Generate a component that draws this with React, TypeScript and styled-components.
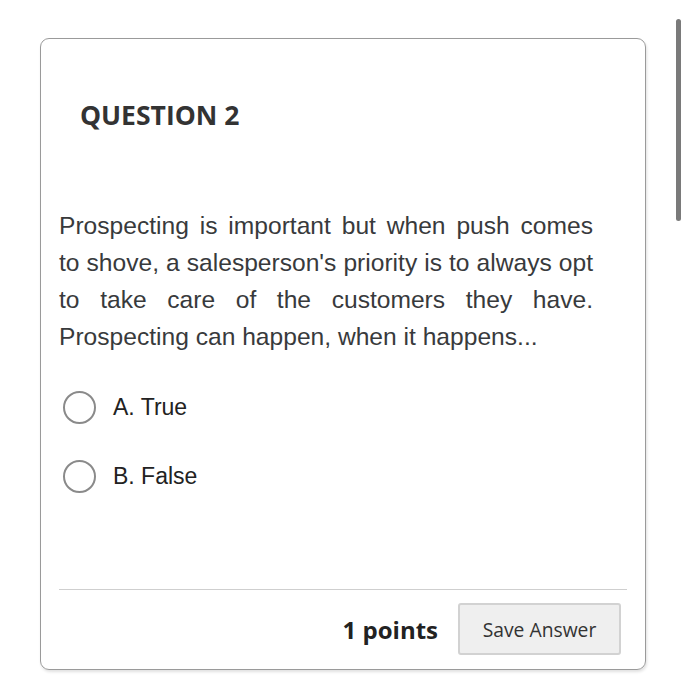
import React from "react";
import styled, { createGlobalStyle } from "styled-components";

const Global = createGlobalStyle`
  html, body { margin: 0; padding: 0; background: #ffffff; }
  body { width: 687px; height: 700px; overflow: hidden; }
`;

const Page = styled.div`
  position: relative;
  width: 687px;
  height: 700px;
  padding: 38px 41px 0 40px;
  box-sizing: border-box;
`;

const Scrollbar = styled.div`
  position: absolute;
  left: 676px;
  top: 19px;
  width: 5px;
  height: 202px;
  border-radius: 3px;
  background: #7a7a7a;
`;

const Card = styled.div`
  box-sizing: border-box;
  width: 606px;
  height: 632px;
  border: 1.5px solid #9a9a9a;
  border-radius: 9px;
  box-shadow: 1px 2px 3px rgba(0, 0, 0, 0.12);
  padding: 0 18px;
  display: flex;
  flex-direction: column;
`;

const Title = styled.h2`
  margin: 60px 0 0 21px;
  font-family: "Open Sans", sans-serif;
  font-weight: 700;
  font-size: 26.5px;
  line-height: 32px;
  color: #333333;
`;

const Prompt = styled.p`
  margin: 76px 34px 0 0;
  font-family: "Liberation Sans", Arial, sans-serif;
  font-size: 24.6px;
  line-height: 37px;
  color: #383a3c;
  text-align: justify;
`;

const Options = styled.div`
  margin-top: 36px;
  display: flex;
  flex-direction: column;
  gap: 36px;
`;

const Option = styled.label`
  display: flex;
  align-items: center;
  gap: 17px;
  padding-left: 4px;
  font-family: "Liberation Sans", Arial, sans-serif;
  font-size: 23px;
  color: #222222;
`;

const Radio = styled.span`
  box-sizing: border-box;
  width: 33px;
  height: 33px;
  border-radius: 50%;
  border: 2.5px solid #8a8a8a;
  background: #ffffff;
`;

const Spacer = styled.div`
  flex: 1;
`;

const Footer = styled.div`
  border-top: 1.5px solid #cfcfcf;
  display: flex;
  justify-content: flex-end;
  align-items: center;
  gap: 20px;
  padding: 13px 6px 14px 0;
`;

const Points = styled.span`
  font-family: "Open Sans", sans-serif;
  font-weight: 700;
  font-size: 24px;
  color: #222222;
`;

const SaveButton = styled.button`
  box-sizing: border-box;
  width: 163px;
  height: 52px;
  background: #efefef;
  border: 2px solid #d2d2d2;
  border-radius: 3px;
  font-family: "Open Sans", sans-serif;
  font-size: 19.3px;
  color: #333333;
`;

export default function App() {
  return (
    <>
      <Global />
      <Page>
        <Scrollbar />
        <Card>
          <Title>QUESTION 2</Title>
          <Prompt>
            Prospecting is important but when push comes to shove, a salesperson's priority is to
            always opt to take care of the customers they have. Prospecting can happen, when it
            happens...
          </Prompt>
          <Options>
            <Option>
              <Radio />
              A. True
            </Option>
            <Option>
              <Radio />
              B. False
            </Option>
          </Options>
          <Spacer />
          <Footer>
            <Points>1 points</Points>
            <SaveButton>Save Answer</SaveButton>
          </Footer>
        </Card>
      </Page>
    </>
  );
}
